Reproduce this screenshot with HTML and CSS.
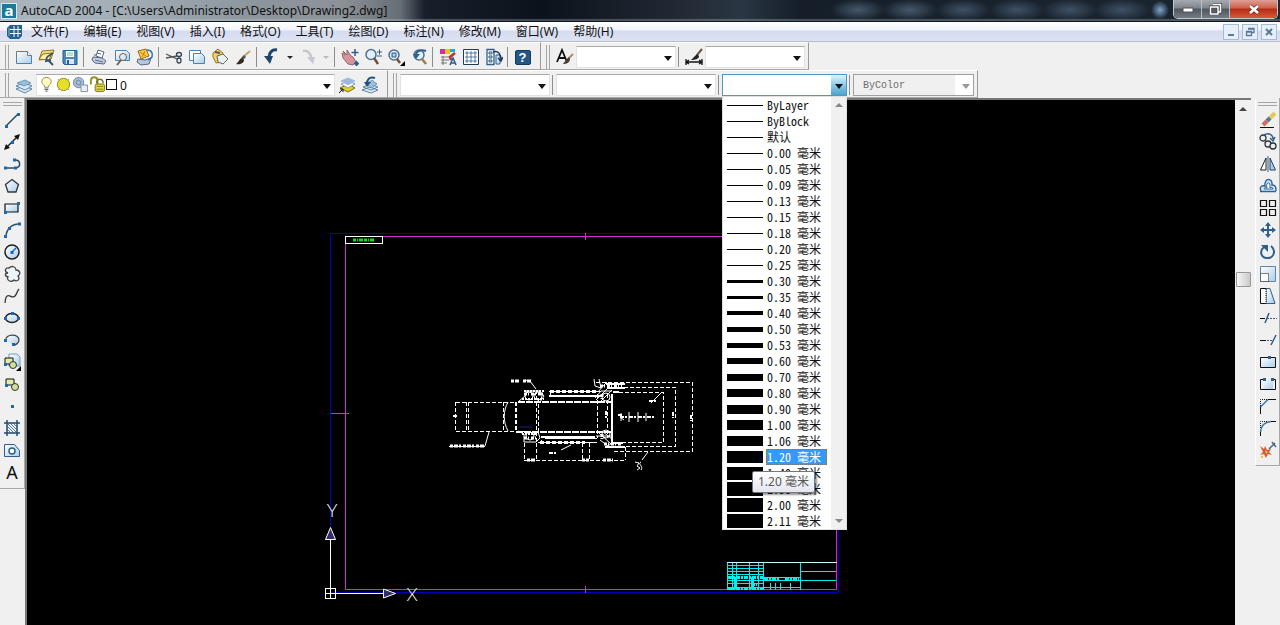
FILE: index.html
```
<!DOCTYPE html>
<html lang="zh-CN">
<head>
    <meta charset="UTF-8">
    <meta name="viewport" content="width=device-width, initial-scale=1.0">
    <title>AutoCAD 2004</title>
    <link rel="stylesheet" href="styles.css">
</head>
<body>

<!-- icon set -->
<svg class="defs" width="0" height="0" aria-hidden="true">
    <defs>
        <linearGradient id="sky" x1="0" y1="0" x2="1" y2="1"><stop offset="0" stop-color="#fff"/><stop offset="1" stop-color="#a9cdea"/></linearGradient>
        <pattern id="hatch" width="3" height="3" patternUnits="userSpaceOnUse"><path d="M0 0l3 3" stroke="#2b5c8c" stroke-width=".8"/></pattern>
    </defs>
    <symbol id="i-new" viewBox="0 0 18 18"><path d="M1.500 3.500h11l4 4v8h-15z" fill="url(#sky)" stroke="#4682b4"/><path d="M12.500 3.500v4h4" fill="#fff" stroke="#4682b4"/></symbol>
    <symbol id="i-open" viewBox="0 0 18 18"><path d="M4 3l12-1-3 9-12 1z" fill="#f3dc7a" stroke="#907a2c"/><path d="M1 11l4-5 9-1-3 7z" fill="#fff3a8" stroke="#8c7620"/><path d="M9 9l6-4M9 9l-1 4 5-1M10 12l5 5" stroke="#38536f" stroke-width="1.800" fill="none"/></symbol>
    <symbol id="i-save" viewBox="0 0 18 18"><path d="M2 2.500h14v14H3.500L2 15z" fill="#4a86bb" stroke="#2a5f90"/><path d="M5 3h8v6H5z" fill="#fff"/><path d="M5 11h8v5H5z" fill="#d7e8f5"/><path d="M6 12h2v4H6z" fill="#2a5f90"/><path d="M6 5h6M6 7h6" stroke="#7db6a0"/></symbol>
    <symbol id="i-plot" viewBox="0 0 18 18"><path d="M6 8l2-6 6 2-2 6z" fill="#fff" stroke="#53678a"/><path d="M3 9l9 1 4 3-2 3-9-1-3-3z" fill="#c5cede" stroke="#53678a"/><path d="M5 12l8 2M7 5l4 1M4 7h2" stroke="#53678a" fill="none"/></symbol>
    <symbol id="i-preview" viewBox="0 0 18 18"><path d="M2.500 2.500h11l3 3v7h-14z" fill="url(#sky)" stroke="#4682b4"/><circle cx="10" cy="9" r="3.500" fill="#d8edfa" stroke="#666"/><path d="M8 12l-4 5" stroke="#7b5a45" stroke-width="2"/></symbol>
    <symbol id="i-publish" viewBox="0 0 18 18"><path d="M2 11l7 1 6-2-2 6-8 1-4-3z" fill="#b9c7dc" stroke="#53678a"/><path d="M2 3l8-2 3 7-8 3z" fill="#f6cf4a" stroke="#9a6a13"/><path d="M4 4l6 4M9 3L6 9" stroke="#c57c17"/><path d="M11 2c5 0 6 4 5 7l-4 3" fill="none" stroke="#2b74a5" stroke-width="1.500"/></symbol>
    <symbol id="i-cut" viewBox="0 0 18 18"><path d="M1 6l11 5M1 10l11-2" stroke="#555" stroke-width="1.300"/><ellipse cx="14" cy="6.500" rx="2.500" ry="2" fill="none" stroke="#345" stroke-width="1.300"/><ellipse cx="14" cy="12.500" rx="2" ry="2.500" fill="none" stroke="#345" stroke-width="1.300"/></symbol>
    <symbol id="i-copy" viewBox="0 0 18 18"><path d="M1.500 2.500h11v10h-11z" fill="#fff" stroke="#4682b4"/><path d="M5.500 5.500h8l3 3v7h-11z" fill="url(#sky)" stroke="#4682b4"/></symbol>
    <symbol id="i-paste" viewBox="0 0 18 18"><path d="M2 5l5-4 5 4-1 9-6 1-3-6z" fill="#f1d269" stroke="#967726"/><path d="M6 8l6-2 5 5-5 5-5-2z" fill="#e7eff7" stroke="#6e674d"/><path d="M4 4l5 1" stroke="#555" stroke-width="2"/></symbol>
    <symbol id="i-brush" viewBox="0 0 18 18"><path d="M16 3L9 9" stroke="#c9a372" stroke-width="2"/><path d="M11 8L8 11" stroke="#555" stroke-width="3"/><path d="M8 10c-3 1-3 4-6 6 4 1 8-1 8-4z" fill="#35291f"/></symbol>
    <symbol id="i-undo" viewBox="0 0 18 18"><path d="M14 2C9 1 6 5 6 9" fill="none" stroke="#1d456f" stroke-width="3"/><path d="M1 8h9l-3 8z" fill="#1d456f"/></symbol>
    <symbol id="i-redo" viewBox="0 0 18 18"><path d="M4 3c5-1 8 3 8 7" fill="none" stroke="#c4c7cb" stroke-width="2.500"/><path d="M8 9h8l-2 7z" fill="#c4c7cb"/></symbol>
    <symbol id="i-pan" viewBox="0 0 18 18"><path d="M1 5l3 2-2-4 4 4 0-5 4 6 2 1 3 5-3 3-5-1-5-6z" fill="#d8949a" stroke="#8d6670"/><path d="M14 14l3 3" stroke="#315e8d" stroke-width="4"/><path d="M14 1v7M10.500 4.500h7" stroke="#315e8d" stroke-width="1.500"/></symbol>
    <symbol id="i-zoom" viewBox="0 0 18 18"><circle cx="7" cy="6.500" r="5" fill="#e1f0fb" stroke="#53708c" stroke-width="1.500"/><path d="M10 10l4 6" stroke="#70513f" stroke-width="2.500"/><path d="M13 4h5M15.500 1.500v5M13 8h5" stroke="#315e8d"/></symbol>
    <symbol id="i-zoomwin" viewBox="0 0 18 18"><circle cx="7" cy="7" r="5" fill="#e1f0fb" stroke="#53708c" stroke-width="1.500"/><path d="M5 5h4v4H5z" fill="#a9cdea" stroke="#315e8d"/><path d="M10 11l3 4" stroke="#70513f" stroke-width="2.500"/><path d="M18 13v5h-5z"/></symbol>
    <symbol id="i-zoomprev" viewBox="0 0 18 18"><circle cx="9" cy="7" r="5" fill="#e1f0fb" stroke="#53708c" stroke-width="1.500"/><path d="M12 11l4 5" stroke="#a07a50" stroke-width="2.500"/><path d="M6 7c0-4 5-6 10-4" fill="none" stroke="#315e8d" stroke-width="2"/><path d="M3 6h7l-4 5z" fill="#315e8d"/></symbol>
    <symbol id="i-props" viewBox="0 0 18 18"><path d="M1 1h5v5H1z" fill="#e424a4"/><path d="M6 1h5v5H6z" fill="#e9c419"/><path d="M11 1h5v3h-5z" fill="#26a6d8"/><path d="M2 9h8M2 12h8M2 15h6M4 8v9" stroke="#777"/><path d="M16 5l-5 4 1 3" stroke="#b03535" stroke-width="2.500" fill="none"/><path d="M11 17l3-7 3 7M12 15h4" stroke="#315e8d" stroke-width="1.500" fill="none"/></symbol>
    <symbol id="i-center" viewBox="0 0 18 18"><path d="M1.500 1.500h15v15h-15z" fill="#fff" stroke="#1d3c60"/><path d="M4 4h2v2H4zM8 4h2v2H8zM12 4h2v2h-2zM4 8h2v2H4zM8 8h2v2H8zM12 8h2v2h-2zM4 12h2v2H4zM8 12h2v2H8zM12 12h2v2h-2z" fill="#fff" stroke="#315e8d" stroke-width=".8"/></symbol>
    <symbol id="i-palette" viewBox="0 0 18 18"><path d="M2 1.500h7v15H2z" fill="#fff" stroke="#315e8d" stroke-width="1.300"/><path d="M4 4h3v2H4zM4 8h3v2H4zM4 12h3v2H4zM11 7h4v9h-4z" fill="#cfe2f3" stroke="#315e8d"/><path d="M8 4c5-2 8 2 8 8M13 10l3 3 2-4" fill="none" stroke="#1d3c60" stroke-width="1.500"/></symbol>
    <symbol id="i-layers" viewBox="0 0 18 18"><path d="M1 13l8-3 8 3-7 4z" fill="#dbe9f3" stroke="#426c94" stroke-width=".8"/><path d="M1 10l8-3 8 3-7 4z" fill="#dbe9f3" stroke="#426c94" stroke-width=".8"/><path d="M2 7l8-3 6 3-7 3z" fill="#9bbfdf" stroke="#5e86ab" stroke-width=".8"/></symbol>
    <symbol id="i-laycur" viewBox="0 0 18 18"><path d="M2 12l8-4 7 4-7 4z" fill="#e1cf24" stroke="#777217"/><path d="M3 8l7-3 7 3-7 4z" fill="#fff" stroke="#839bb2"/><path d="M3 5l7-3 7 3-7 4z" fill="#9db8e4" stroke="#a8bcd0"/><path d="M1 17l4-4M2 13h3v3" fill="none" stroke="#111"/></symbol>
    <symbol id="i-layprev" viewBox="0 0 18 18"><path d="M1 14l8-3 8 3-7 3zM2 11l7-3 8 3-7 3z" fill="#dbe9f3" stroke="#426c94" stroke-width=".8"/><path d="M5 8l6-4 5 4-6 4z" fill="#9bbfdf" stroke="#5e86ab" stroke-width=".8"/><path d="M14 2C8 0 6 4 6 8" fill="none" stroke="#234f7c" stroke-width="2"/><path d="M3 6h7l-4 5z" fill="#234f7c"/></symbol>
    <symbol id="i-bulb" viewBox="0 0 18 18"><path d="M7 12c0-3-3-3-3-6 0-6 10-6 10 0 0 3-3 3-3 6z" fill="#fffbc3" stroke="#928b4c"/><path d="M7 14h4M8 16h2" stroke="#667" stroke-width="1.500"/></symbol>
    <symbol id="i-sun" viewBox="0 0 18 18"><path d="M3 3l12 12M15 3L3 15" stroke="#999"/><circle cx="9" cy="9" r="6.500" fill="#e6de28" stroke="#8d861a"/></symbol>
    <symbol id="i-vp" viewBox="0 0 18 18"><circle cx="7" cy="7" r="5.500" fill="#a9bdd3" stroke="#6887a5"/><circle cx="7" cy="7" r="2.500" fill="none" stroke="#6887a5"/><path d="M9.500 9.500h7v7h-7z" fill="#e8eef4" stroke="#7890a8"/></symbol>
    <symbol id="i-lock" viewBox="0 0 18 18"><path d="M2 9V5c0-5 7-5 7 0v4" fill="none" stroke="#929126" stroke-width="2"/><path d="M8 8c0-6 7-6 7 0" fill="none" stroke="#777526" stroke-width="1.500"/><rect x="6.500" y="8.500" width="10" height="8" rx="2" fill="#ddd63d" stroke="#777526"/><path d="M8 11h7M8 14h7" stroke="#8a8525"/></symbol>

    <symbol id="i-line" viewBox="0 0 18 18"><path d="M3 15L15 3" stroke="#24445f" stroke-width="1.500"/><path d="M2 14h3v3H2zM14 2h3v3h-3z" fill="#1c69b0"/></symbol>
    <symbol id="i-xline" viewBox="0 0 18 18"><path d="M3 15L15 3" stroke="#222" stroke-width="1.500"/><path d="M1 17l2-6 4 4zM17 1l-6 2 4 4z" fill="#111"/><path d="M8 8h3v3H8z" fill="#1c69b0"/></symbol>
    <symbol id="i-pline" viewBox="0 0 18 18"><path d="M3 13h10c5-1 5-8-1-8" fill="none" stroke="#35495c" stroke-width="1.500"/><path d="M1 11.500h3v3H1zM11 11.500h3v3h-3zM10 3.500h3v3h-3z" fill="#1c69b0"/></symbol>
    <symbol id="i-polygon" viewBox="0 0 18 18"><path d="M9 2.500l6.500 5-2.500 7.500H5l-2.500-7.500z" fill="url(#sky)" stroke="#30383f" stroke-width="1.300"/></symbol>
    <symbol id="i-rect" viewBox="0 0 18 18"><path d="M2 5h13v8H2z" fill="url(#sky)" stroke="#111" stroke-width="1.200"/><path d="M1 12h3v3H1zM14 3h3v3h-3z" fill="#1c69b0"/></symbol>
    <symbol id="i-arc" viewBox="0 0 18 18"><path d="M3 16C3 9 8 3 16 3" fill="none" stroke="#315372" stroke-width="1.500"/><path d="M1 14h3v3H1zM5 6h3v3H5zM15 1.500h3v3h-3z" fill="#1c69b0"/></symbol>
    <symbol id="i-circle" viewBox="0 0 18 18"><circle cx="9" cy="9" r="7" fill="url(#sky)" stroke="#222" stroke-width="1.500"/><path d="M9 9l4-4" stroke="#1c69b0" stroke-width="1.500"/><path d="M7.500 8h3v3h-3z" fill="#1c69b0"/></symbol>
    <symbol id="i-cloud" viewBox="0 0 18 18"><path d="M5 8C1 7 2 2 6 3c3-3 7-1 7 2 4 0 5 4 2 6 3 4-2 6-4 4-3 3-8 0-6-3-4-1-3-4 0-4z" fill="#edf4fa" stroke="#444" stroke-width="1.300"/></symbol>
    <symbol id="i-spline" viewBox="0 0 18 18"><path d="M2 16C3 2 9 13 12 9c2-2 2-5 4-7" fill="none" stroke="#333" stroke-width="1.300"/></symbol>
    <symbol id="i-ellipse" viewBox="0 0 18 18"><ellipse cx="9" cy="9" rx="6.500" ry="4.500" fill="url(#sky)" stroke="#222" stroke-width="1.500"/><path d="M1 8h3v3H1zM8 3h3v3H8zM14 8h3v3h-3z" fill="#1c69b0"/></symbol>
    <symbol id="i-earc" viewBox="0 0 18 18"><path d="M3 9C2 3 16 2 16 9c0 3-3 5-6 5" fill="url(#sky)" stroke="#444" stroke-width="1.300"/><path d="M1 8h3v3H1zM9 12h3v3H9z" fill="#1c69b0"/></symbol>
    <symbol id="i-insert" viewBox="0 0 18 18"><path d="M6 1h8l3 3v9H6z" fill="url(#sky)" stroke="#729ac0"/><path d="M2 5h8v6H2z" fill="#dfecab" stroke="#111"/><circle cx="10" cy="12" r="3.500" fill="#cde29a" stroke="#333"/><path d="M18 13v5h-5z"/><path d="M1 10h3v3H1z" fill="#1c69b0"/></symbol>
    <symbol id="i-block" viewBox="0 0 18 18"><path d="M3 4h8v6H3z" fill="#dfecab" stroke="#111"/><circle cx="12" cy="12" r="3.500" fill="#cde29a" stroke="#333"/><path d="M2 9h3v3H2z" fill="#1c69b0"/></symbol>
    <symbol id="i-point" viewBox="0 0 18 18"><path d="M8 8h3v3H8z" fill="#1c69b0"/></symbol>
    <symbol id="i-hatch" viewBox="0 0 18 18"><path d="M4 4h10v10H4z" fill="url(#hatch)"/><path d="M4 1v16M14 1v16M1 4h16M1 14h16" stroke="#234c70" stroke-width="1.500"/></symbol>
    <symbol id="i-region" viewBox="0 0 18 18"><path d="M1.500 3.500h10l5 6v6h-15z" fill="url(#sky)" stroke="#315e8d"/><circle cx="9" cy="10" r="3" fill="#fff" stroke="#315e8d" stroke-width="1.500"/></symbol>

    <symbol id="i-erase" viewBox="0 0 18 18"><path d="M16 2l-6 6" stroke="#e6ca4e" stroke-width="4"/><path d="M11 7l-3 3" stroke="#5279a6" stroke-width="4"/><path d="M8 10l-4 4" stroke="#d66860" stroke-width="4"/><path d="M1 16.500h14" stroke="#111"/></symbol>
    <symbol id="i-copyobj" viewBox="0 0 18 18"><g fill="#e9f1f8" stroke="#333" stroke-width="1.300"><circle cx="4" cy="5" r="3"/><circle cx="9" cy="11" r="3"/><circle cx="14" cy="13" r="3"/></g><path d="M5 2c5-3 9 0 9 4M11 5l3 3 2-4" fill="none" stroke="#315e8d" stroke-width="1.500"/></symbol>
    <symbol id="i-mirror" viewBox="0 0 18 18"><path d="M7 3v12H1.500z" fill="#fff" stroke="#222"/><path d="M11 3v12h5.500z" fill="#a9cdea" stroke="#24445f"/><path d="M9 1v16" stroke="#315e8d"/></symbol>
    <symbol id="i-offset" viewBox="0 0 18 18"><path d="M1 14.500h16M2 14c-2-4 1-6 4-5C5 0 14 1 13 8c4 0 4 3 4 6" fill="#d7e8f6" stroke="#2b639a" stroke-width="1.400"/><path d="M5 12h9c0-2-2-2-3-1 1-8-5-6-3 0-2-1-3 0-3 1z" fill="#fff" stroke="#2b639a"/></symbol>
    <symbol id="i-array" viewBox="0 0 18 18"><path d="M1.500 1.500h6v6h-6zM10.500 1.500h6v6h-6zM1.500 10.500h6v6h-6zM10.500 10.500h6v6h-6z" fill="#eee" stroke="#111" stroke-width="1.200"/></symbol>
    <symbol id="i-move" viewBox="0 0 18 18"><path d="M9 3v12M3 9h12" stroke="#315e8d" stroke-width="2"/><path d="M9 1l3 4H6zM9 17l3-4H6zM1 9l4-3v6zM17 9l-4-3v6z" fill="#315e8d"/></symbol>
    <symbol id="i-rotate" viewBox="0 0 18 18"><path d="M12 3c6 5 2 13-4 12C2 15 0 8 5 4" fill="none" stroke="#315e8d" stroke-width="2"/><path d="M2 2h7v7z" fill="#315e8d"/></symbol>
    <symbol id="i-scale" viewBox="0 0 18 18"><path d="M1.500 1.500h15v15h-15z" fill="url(#sky)" stroke="#5e86ab"/><path d="M1.500 8.500h8v8h-8z" fill="#fff" stroke="#111" stroke-dasharray="1 1"/></symbol>
    <symbol id="i-stretch" viewBox="0 0 18 18"><path d="M7 1.500h4l5 15H7z" fill="url(#sky)" stroke="#315e8d"/><path d="M7 1.500H1.500v15H7" fill="#fff" stroke="#111"/><path d="M7 2v14" stroke="#111" stroke-dasharray="1 1"/></symbol>
    <symbol id="i-trim" viewBox="0 0 18 18"><path d="M1 9.500h5" stroke="#111"/><path d="M8 9.500h10" stroke="#315e8d" stroke-dasharray="2 1"/><path d="M10 4L6 14" stroke="#315e8d" stroke-width="1.500"/></symbol>
    <symbol id="i-extend" viewBox="0 0 18 18"><path d="M1 9.500h6" stroke="#111"/><path d="M8 9.500h5" stroke="#315e8d" stroke-dasharray="2 1"/><path d="M17 4l-5 10" stroke="#315e8d" stroke-width="1.500"/></symbol>
    <symbol id="i-breakpt" viewBox="0 0 18 18"><path d="M1.500 4.500h15v10h-15z" fill="url(#sky)" stroke="#111"/><path d="M9 3h3v3H9z" fill="#315e8d"/></symbol>
    <symbol id="i-break" viewBox="0 0 18 18"><path d="M4 4h10v10H4z" fill="url(#sky)"/><path d="M5 4.500H1.500v10h15v-10H13" fill="none" stroke="#111"/><path d="M4 3h3v3H4zM12 3h3v3h-3z" fill="#315e8d"/></symbol>
    <symbol id="i-chamfer" viewBox="0 0 18 18"><path d="M1.500 17V9M9 2.500h8" stroke="#111"/><path d="M1.500 9V2.500H9" fill="none" stroke="#111" stroke-dasharray="1 1"/><path d="M1.500 10L9 2.500" stroke="#3878b4" stroke-width="1.500"/></symbol>
    <symbol id="i-fillet" viewBox="0 0 18 18"><path d="M1.500 17v-5M12 2.500h5" stroke="#111"/><path d="M1.500 9V2.500H9" fill="none" stroke="#111" stroke-dasharray="1 1"/><path d="M1.500 13C2 6 6 3 12 2.500" fill="none" stroke="#3878b4" stroke-width="1.500"/></symbol>
    <symbol id="i-explode" viewBox="0 0 18 18"><path d="M1 5l4 3 1-3 2 4 4-1-2 3 3 3-4-1-2 4-2-4-4 1 3-3z" fill="#d95a34"/><path d="M6 9l3 2-2 2zM2 15h2v2H2z" fill="#f4c040"/><path d="M10 8l6-6M13 1l4 5" stroke="#4a6685" stroke-width="1.500"/></symbol>
</svg>

<header class="titlebar">
    <span class="app-logo">a</span>
    <h1>AutoCAD 2004 - [C:\Users\Administrator\Desktop\Drawing2.dwg]</h1>
    <div class="window-buttons">
        <button class="win" aria-label="最小化"><svg width="12" height="10"><path d="M1 4h10v4H1z" fill="#fff" stroke="#555"/></svg></button>
        <button class="win" aria-label="还原"><svg width="13" height="12"><path d="M4 1.500h7.500V9H9M1.500 4H9v7H1.500z" fill="none" stroke="#444" stroke-width="3"/><path d="M4 1.500h7.500V9H9M1.500 4H9v7H1.500z" fill="none" stroke="#fff" stroke-width="1.500"/></svg></button>
        <button class="win win-close" aria-label="关闭"><svg width="12" height="11"><path d="M2 2l8 7M10 2L2 9" stroke="#633" stroke-width="4"/><path d="M2 2l8 7M10 2L2 9" stroke="#fff" stroke-width="2.500"/></svg></button>
    </div>
</header>

<nav class="menubar">
    <svg class="doc-icon" width="16" height="16" viewBox="0 0 16 16"><path d="M3 1h12v11l-3 3H3L0 12V4z" fill="#23618f"/><path d="M3 5.500h11M3 9.500h11M7 2v11M11 2v11" stroke="#fff"/><path d="M2 4v8" stroke="#8bb8d8"/></svg>
    <button>文件(F)</button>
    <button>编辑(E)</button>
    <button>视图(V)</button>
    <button>插入(I)</button>
    <button>格式(O)</button>
    <button>工具(T)</button>
    <button>绘图(D)</button>
    <button>标注(N)</button>
    <button>修改(M)</button>
    <button>窗口(W)</button>
    <button>帮助(H)</button>
    <div class="doc-buttons">
        <button aria-label="最小化图形"><svg width="10" height="10"><path d="M2 8h6" stroke="#5a7897" stroke-width="2"/></svg></button>
        <button aria-label="还原图形"><svg width="10" height="10"><path d="M3 1.500h6v4H7M1.500 4.500h5v4h-5zM3 2h6M1 5h6" fill="none" stroke="#5a7897" stroke-width="1.300"/></svg></button>
        <button aria-label="关闭图形"><svg width="10" height="10"><path d="M2 2l6 6M8 2L2 8" stroke="#5a7897" stroke-width="2"/></svg></button>
    </div>
</nav>

<div class="toolbar-row">
    <div class="toolbar">
        <span class="grip"></span>
        <button class="tool" aria-label="新建"><svg><use href="#i-new"/></svg></button>
        <button class="tool" aria-label="打开"><svg><use href="#i-open"/></svg></button>
        <button class="tool" aria-label="保存"><svg><use href="#i-save"/></svg></button>
        <span class="sep"></span>
        <button class="tool" aria-label="打印"><svg><use href="#i-plot"/></svg></button>
        <button class="tool" aria-label="打印预览"><svg><use href="#i-preview"/></svg></button>
        <button class="tool" aria-label="发布"><svg><use href="#i-publish"/></svg></button>
        <span class="sep"></span>
        <button class="tool" aria-label="剪切"><svg><use href="#i-cut"/></svg></button>
        <button class="tool" aria-label="复制"><svg><use href="#i-copy"/></svg></button>
        <button class="tool" aria-label="粘贴"><svg><use href="#i-paste"/></svg></button>
        <button class="tool" aria-label="特性匹配"><svg><use href="#i-brush"/></svg></button>
        <span class="sep"></span>
        <button class="tool" aria-label="放弃"><svg><use href="#i-undo"/></svg></button>
        <button class="caret" aria-label="放弃列表"></button>
        <button class="tool" aria-label="重做"><svg><use href="#i-redo"/></svg></button>
        <button class="caret caret-off" aria-label="重做列表"></button>
        <span class="sep"></span>
        <button class="tool" aria-label="实时平移"><svg><use href="#i-pan"/></svg></button>
        <button class="tool" aria-label="实时缩放"><svg><use href="#i-zoom"/></svg></button>
        <button class="tool" aria-label="窗口缩放"><svg><use href="#i-zoomwin"/></svg></button>
        <button class="tool" aria-label="缩放上一个"><svg><use href="#i-zoomprev"/></svg></button>
        <span class="sep"></span>
        <button class="tool" aria-label="特性"><svg><use href="#i-props"/></svg></button>
        <button class="tool" aria-label="设计中心"><svg><use href="#i-center"/></svg></button>
        <button class="tool" aria-label="工具选项板"><svg><use href="#i-palette"/></svg></button>
        <span class="sep"></span>
        <button class="tool" aria-label="帮助"><span class="help-mark">?</span></button>
    </div>
    <div class="toolbar">
        <span class="grip"></span>
        <button class="tool" aria-label="文字样式"><svg viewBox="0 0 18 18"><path d="M1 14L6 2l5 12M3 10h6" fill="none" stroke="#111" stroke-width="1.800"/><path d="M17 6l-5 5" stroke="#a88a70" stroke-width="2"/><path d="M13 9l-3 3-3 4c4 0 7-2 7-5z" fill="#4b3c35"/></svg></button>
        <div class="combo style-combo"><select aria-label="文字样式管理器"><option></option></select></div>
        <span class="sep"></span>
        <button class="tool" aria-label="标注样式"><svg viewBox="0 0 18 18"><path d="M1 11v6M17 11v6M1 14h16M4 12l-3 2 3 2M14 12l3 2-3 2" stroke="#111" stroke-width="1.300" fill="none"/><path d="M17 1l-5 6" stroke="#665646" stroke-width="2"/><path d="M12 6l-6 6c4 0 8-1 8-4z" fill="#222"/></svg></button>
        <div class="combo style-combo"><select aria-label="标注样式管理器"><option></option></select></div>
    </div>
</div>

<div class="toolbar-row">
    <div class="toolbar">
        <span class="grip"></span>
        <button class="tool" aria-label="图层特性管理器"><svg><use href="#i-layers"/></svg></button>
        <div class="combo layer-combo">
            <select aria-label="图层"><option>0</option></select>
            <div class="layer-state">
                <svg><use href="#i-bulb"/></svg>
                <svg><use href="#i-sun"/></svg>
                <svg><use href="#i-vp"/></svg>
                <svg><use href="#i-lock"/></svg>
                <span class="swatch"></span>
            </div>
        </div>
        <button class="tool" aria-label="置为当前图层"><svg><use href="#i-laycur"/></svg></button>
        <button class="tool" aria-label="上一个图层"><svg><use href="#i-layprev"/></svg></button>
    </div>
    <div class="toolbar">
        <span class="grip"></span>
        <div class="combo color-combo"><select aria-label="颜色控制"><option></option></select></div>
        <span class="sep"></span>
        <div class="combo linetype-combo"><select aria-label="线型控制"><option></option></select></div>
        <span class="sep"></span>
        <div class="combo weight-combo open">
            <select aria-label="线宽控制"><option></option></select>
            <div class="weight-popup">
                <ul class="weight-list" id="weightList" role="listbox" aria-label="线宽"></ul>
                <div class="popup-scroll"><span class="up"></span><span class="down"></span></div>
                <div class="tooltip" role="tooltip">1.20 毫米</div>
            </div>
        </div>
        <span class="sep"></span>
        <div class="combo plot-combo off"><select aria-label="打印样式控制" disabled><option>ByColor</option></select></div>
    </div>
</div>

<main class="workspace">
    <aside class="side">
        <span class="grip-h"></span>
        <button class="tool" aria-label="直线"><svg><use href="#i-line"/></svg></button>
        <button class="tool" aria-label="构造线"><svg><use href="#i-xline"/></svg></button>
        <button class="tool" aria-label="多段线"><svg><use href="#i-pline"/></svg></button>
        <button class="tool" aria-label="正多边形"><svg><use href="#i-polygon"/></svg></button>
        <button class="tool" aria-label="矩形"><svg><use href="#i-rect"/></svg></button>
        <button class="tool" aria-label="圆弧"><svg><use href="#i-arc"/></svg></button>
        <button class="tool" aria-label="圆"><svg><use href="#i-circle"/></svg></button>
        <button class="tool" aria-label="修订云线"><svg><use href="#i-cloud"/></svg></button>
        <button class="tool" aria-label="样条曲线"><svg><use href="#i-spline"/></svg></button>
        <button class="tool" aria-label="椭圆"><svg><use href="#i-ellipse"/></svg></button>
        <button class="tool" aria-label="椭圆弧"><svg><use href="#i-earc"/></svg></button>
        <button class="tool" aria-label="插入块"><svg><use href="#i-insert"/></svg></button>
        <button class="tool" aria-label="创建块"><svg><use href="#i-block"/></svg></button>
        <button class="tool" aria-label="点"><svg><use href="#i-point"/></svg></button>
        <button class="tool" aria-label="图案填充"><svg><use href="#i-hatch"/></svg></button>
        <button class="tool" aria-label="面域"><svg><use href="#i-region"/></svg></button>
        <button class="tool text-mark" aria-label="多行文字">A</button>
    </aside>

    <div class="canvas">
        <svg viewBox="27 100 1208 525" preserveAspectRatio="xMinYMin meet" fill="none">
            <!-- sheet frame -->
            <g stroke="#0000b4" shape-rendering="crispEdges">
                <path d="M330.500 233.500H838.500V592.500H330.500z"/>
            </g>
            <g stroke="#d428d4" shape-rendering="crispEdges">
                <path d="M345.500 236.500H836.500V589.500H345.500zM585.500 233v7M585.500 586v7M331 413.500h18"/>
            </g>
            <path d="M345.500 236.500h37v7h-37z" stroke="#fff" shape-rendering="crispEdges"/>
            <path d="M353 240h22" stroke="#12e012" stroke-width="3" stroke-dasharray="3 1 1 1 4 1"/>

            <!-- shaft assembly -->
            <g stroke="#fff" shape-rendering="crispEdges">
                <path stroke-dasharray="4 2" d="M455.500 402.500H516M455.500 431.500H524M455.500 402v29M466.500 402v29M468.500 402v29M503.500 402v29M515.500 402v29M516.500 402v29M536.500 390v53M538.500 398v35M597.500 394v44M607.500 394v44M612.500 392.500h50.500v50H614M612 387.500h63.500v59H625M596 382.500h96.500v69H614"/>
                <path stroke-dasharray="4 2" d="M524.500 443v17M536.500 443v17M582.500 443v17M589.500 443v17M625.500 447v13M524 460.500h101"/>
                <path stroke-width="2" stroke-dasharray="7 1" d="M518 402h93M516 432h96"/>
                <path stroke-width="2" d="M549 396h53M541 437h54M612 394v50"/>
                <path d="M545 438.500h52M538 442.500h59M549 391.500h52M550 390v7M541 440v3"/>
                <path stroke-width="3" stroke-dasharray="4 2" d="M550 391h48M540 442h45"/>
                <path stroke-width="2" d="M606 384h19M607 388h18M613 392h6M612 443h11M605 447h20"/>
            </g>
            <g stroke="#fff">
                <path d="M508 402c-5 9-5 20 0 29M518 402l8-7v-4h14l4 5-4 6M518 431l6 3v8h12l4-4-2-6M598 392l6-7 3-3M594 379l1 7 6 2-2-9M600 440l8 6 4-3M595 398l6-7h11M596 436h17M596 400l14-14M600 402l12-12M598 432l14 13M602 431l10 8"/>
                <circle cx="529" cy="396" r="4"/><circle cx="538" cy="396" r="4"/><circle cx="530" cy="436" r="4"/><circle cx="606" cy="397" r="4"/><circle cx="606" cy="434" r="4"/>
                <path stroke-width="3" stroke-dasharray="3 1 1 2" d="M524 394h21M600 386h22M524 438h13M604 444h18M602 434v7M602 394v6"/>
                <path stroke-width="2" stroke-dasharray="2 1" d="M522 399h22M524 391h20M522 434h15"/>
                <path d="M525 380l5 1 6 8M485 446l4-14M561 450l10-5M651 403l11-11M642 460l6-8"/>
                <path stroke-width="3" stroke-dasharray="3 1 4 1 2 2" d="M511 381h9M523 381h9M450 446h35M527 460h8M582 460h7M603 460h10"/>
                <path stroke-width="2" stroke-dasharray="4 1 2 2" d="M620 417h34M618 415h5M649 401h7M549 453h8M673 412v6M691 415v6M453 416h5M606 411v8"/>
                <path d="M621 413v8M629 412v10M638 412v10M646 413v8M620 417l4 3M635 462l4 1-2 3 3 2-3 2M641 462c-4 2 3 4 0 8M449 446.500h36"/>
            </g>
            <path d="M519 427h13" stroke="#1a1a88"/>

            <!-- title block -->
            <g stroke="#00f0f0" shape-rendering="crispEdges">
                <path d="M727.500 562v28M732.500 562v28M736.500 562v28M749.500 562v28M758.500 562v28M763.500 562v28M800.500 562v28M727 565.500h36M727 568.500h36M727 571.500h36M727 574.500h36M727 580.500h73M727 583.500h36M727 587.500h73M763 577.500h37M800 571.500h36M800 580.500h36M770.500 583v7M775.500 583v7M780.500 583v7M790.500 583v7"/>
                <path stroke-width="3" stroke-dasharray="4 1 2 1" d="M728 577h35M764 579h15M785 579h14M751 584h6M728 588h35"/>
                <path stroke-width="3" d="M735 577v12M752 577v12"/>
                <path stroke="#c8ffff" d="M727 562.500h110"/>
            </g>

            <!-- UCS icon -->
            <g stroke="#fff">
                <path shape-rendering="crispEdges" d="M325.500 588.500h10v10h-10zM330.500 598v-58M325 593.500h59"/>
                <path fill="#332f66" d="M325.500 539.500l5-12 5 12zM383.500 589l12 4.500-12 4.500z"/>
            </g>
            <text class="axis" x="332" y="517" text-anchor="middle">Y</text>
            <text class="axis" x="412" y="601" text-anchor="middle">X</text>
        </svg>
    </div>

    <div class="scrollbar"><span class="up"></span><span class="thumb"></span></div>

    <aside class="side side-right">
        <span class="grip-h"></span>
        <button class="tool" aria-label="删除"><svg><use href="#i-erase"/></svg></button>
        <button class="tool" aria-label="复制对象"><svg><use href="#i-copyobj"/></svg></button>
        <button class="tool" aria-label="镜像"><svg><use href="#i-mirror"/></svg></button>
        <button class="tool" aria-label="偏移"><svg><use href="#i-offset"/></svg></button>
        <button class="tool" aria-label="阵列"><svg><use href="#i-array"/></svg></button>
        <button class="tool" aria-label="移动"><svg><use href="#i-move"/></svg></button>
        <button class="tool" aria-label="旋转"><svg><use href="#i-rotate"/></svg></button>
        <button class="tool" aria-label="缩放"><svg><use href="#i-scale"/></svg></button>
        <button class="tool" aria-label="拉伸"><svg><use href="#i-stretch"/></svg></button>
        <button class="tool" aria-label="修剪"><svg><use href="#i-trim"/></svg></button>
        <button class="tool" aria-label="延伸"><svg><use href="#i-extend"/></svg></button>
        <button class="tool" aria-label="打断于点"><svg><use href="#i-breakpt"/></svg></button>
        <button class="tool" aria-label="打断"><svg><use href="#i-break"/></svg></button>
        <button class="tool" aria-label="倒角"><svg><use href="#i-chamfer"/></svg></button>
        <button class="tool" aria-label="圆角"><svg><use href="#i-fillet"/></svg></button>
        <button class="tool" aria-label="分解"><svg><use href="#i-explode"/></svg></button>
    </aside>
</main>

<script>
    // label, line thickness in px
    const weights = [
        ["ByLayer", 1], ["ByBlock", 1], ["默认", 1],
        ["0.00 毫米", 1], ["0.05 毫米", 1], ["0.09 毫米", 1], ["0.13 毫米", 1],
        ["0.15 毫米", 1], ["0.18 毫米", 1], ["0.20 毫米", 1], ["0.25 毫米", 1],
        ["0.30 毫米", 3], ["0.35 毫米", 3], ["0.40 毫米", 4], ["0.50 毫米", 5],
        ["0.53 毫米", 5], ["0.60 毫米", 6], ["0.70 毫米", 7], ["0.80 毫米", 8],
        ["0.90 毫米", 9], ["1.00 毫米", 10], ["1.06 毫米", 10], ["1.20 毫米", 12],
        ["1.40 毫米", 13], ["1.58 毫米", 14], ["2.00 毫米", 14], ["2.11 毫米", 14]
    ];
    const selected = "1.20 毫米";

    document.getElementById("weightList").innerHTML = weights.map(([label, size]) => `
        <li role="option" aria-selected="${label === selected}">
            <span class="sample"><span class="stroke" style="height: ${size}px"></span></span>
            <span class="label">${label}</span>
        </li>`).join("");
</script>

</body>
</html>
```
FILE: styles.css
```
* { box-sizing: border-box; }
body { margin: 0; height: 100vh; display: flex; flex-direction: column; overflow: hidden; background: #f0f0f0; color: #111; font-family: "Noto Sans", "Noto Sans CJK SC", sans-serif; font-size: 12px; }
button { padding: 0; border: 0; background: none; color: inherit; font: inherit; }
.defs { position: absolute; }

/* title bar */
.titlebar {
    display: flex; align-items: center; flex: none; height: 22px; padding-right: 2px; border-bottom: 1px solid #10161d;
    background:
        radial-gradient(circle 9px at 1160px 10px, #7fa6cd, transparent),
        radial-gradient(ellipse 28px 11px at 858px 10px, #46586b, transparent),
        radial-gradient(ellipse 28px 11px at 910px 10px, #46586b, transparent),
        radial-gradient(ellipse 28px 11px at 963px 10px, #3f5165, transparent),
        radial-gradient(ellipse 28px 11px at 1017px 10px, #3f5165, transparent),
        radial-gradient(ellipse 28px 11px at 1070px 10px, #3f5165, transparent),
        radial-gradient(ellipse 28px 11px at 1122px 10px, #3f5165, transparent),
        linear-gradient(90deg, #a9b4bd 0, #a3aeb6 120px, #8d969d 250px, #8c9298 340px, #666e76 400px, #161f2a 425px, #0b121b 540px, #242d38 700px, #2b3644 740px, #151e29 800px, #1c2632 100%);
    box-shadow: inset 0 -2px 1px rgba(200, 210, 220, 0.3);
}
.app-logo { width: 16px; height: 16px; margin: 0 4px 0 1px; border: 1px solid #d5eaf2; background: #187b9b; color: #fff; font-size: 15px; font-weight: bold; line-height: 12px; text-align: center; }
.titlebar h1 { flex: 1; margin: 0; font-size: 12px; font-weight: normal; white-space: nowrap; }
.window-buttons { display: flex; align-self: flex-start; height: 19px; border: 1px solid #c3c8cd; border-top: 0; border-radius: 0 0 5px 5px; overflow: hidden; }
.win { display: flex; align-items: center; justify-content: center; width: 28px; border-right: 1px solid #b9bfc5; background: linear-gradient(#a5abb1, #7c848c 45%, #4e565f 50%, #737b84); }
.win-close { width: 47px; border: 0; background: linear-gradient(#dda095, #cc604c 45%, #b52c13 50%, #d55a3b); }

/* menu bar */
.menubar { display: flex; align-items: center; flex: none; gap: 1px; height: 20px; padding: 0 3px 0 7px; border-bottom: 1px solid #b6bccc; background: linear-gradient(#fff, #f1f4fb 40%, #d6dcef 50%, #dde3f4); }
.menubar > button { padding: 0 7px; line-height: 18px; white-space: nowrap; }
.doc-icon { flex: none; }
.doc-buttons { display: flex; gap: 3px; margin-left: auto; }
.doc-buttons button { display: flex; align-items: center; justify-content: center; width: 16px; height: 16px; border: 1px solid #a5bcd6; background: #e6effa; }

/* toolbars */
.toolbar-row { display: flex; flex: none; height: 28px; }
.toolbar { display: flex; align-items: center; padding: 2px 6px 0 0; border-right: 1px solid #9a9a9a; border-bottom: 1px solid #a8a8a8; border-top: 1px solid #fff; }
.toolbar:last-child { padding-right: 3px; }
.grip { flex: none; width: 4px; height: 24px; margin: 0 3px 0 5px; border: 1px solid #a5a5a5; border-width: 0 1px; }
.sep { flex: none; width: 1px; height: 20px; margin: 0 3px 0 2px; background: #8e8e8e; }
.tool { display: flex; align-items: center; justify-content: center; flex: none; width: 23px; height: 22px; }
.tool svg { width: 18px; height: 18px; }
.caret { width: 13px; height: 22px; }
.caret::before { content: ""; display: block; width: 0; margin: auto; border: 3px solid transparent; border-top-color: #222; border-bottom: 0; }
.caret-off::before { border-top-color: #bbb; }
.help-mark { width: 16px; height: 15px; border: 1px solid #123c64; border-radius: 2px; background: #245785; color: #fff; font: bold 13px "Liberation Sans", sans-serif; line-height: 13px; text-align: center; }
.text-mark { font-size: 18px; line-height: 22px; }

/* combo boxes */
.combo { position: relative; flex: none; height: 22px; }
.combo select { appearance: none; display: block; width: 100%; height: 100%; padding: 0 20px 0 6px; border: 1px solid #e2e2e2; border-top-color: #aaa; border-radius: 0; background: #fff; color: #111; font: 12px "Noto Sans", sans-serif; }
.combo::after { content: ""; position: absolute; right: 4px; top: 10px; border: 4px solid transparent; border-top: 5px solid #111; border-bottom: 0; pointer-events: none; }
.style-combo { width: 100px; }
.layer-combo { width: 299px; margin-left: 1px; }
.layer-combo select { padding-left: 83px; }
.color-combo { width: 150px; }
.linetype-combo { width: 160px; }
.weight-combo { width: 125px; }
.plot-combo { width: 121px; }
.layer-state { position: absolute; left: 2px; top: 2px; display: flex; align-items: center; pointer-events: none; }
.layer-state svg { width: 17px; height: 17px; }
.swatch { width: 11px; height: 11px; border: 1px solid #111; background: #fff; }
.open select { border: 1px solid #4b9ac4; background: linear-gradient(#dff3fd, #8ccbea 50%, #4ea3cf) right / 15px 100% no-repeat #fff; }
.off select { border-color: #a0a0a0; background: linear-gradient(#fff, #fff) right / 18px 100% no-repeat #f0f0f0; color: #6d6d6d; padding-left: 9px; font: 10px "Liberation Mono", monospace; opacity: 1; }
.off::after { border-top-color: #999; }

/* lineweight popup */
.weight-popup { position: absolute; z-index: 2; left: 0; top: 22px; display: flex; width: 125px; border: 1px solid #e0e0e0; background: #fff; }
.weight-list { flex: 1; margin: 0; padding: 0; list-style: none; }
.weight-list li { display: flex; align-items: center; height: 16px; padding-left: 4px; }
.sample { display: flex; align-items: center; width: 36px; height: 16px; }
.stroke { width: 100%; background: #000; }
.label { margin-left: 3px; padding: 0 6px 0 1px; font: 12px "Noto Sans CJK SC", sans-serif; font-feature-settings: "hwid"; line-height: 16px; white-space: nowrap; }
.weight-list li[aria-selected="true"] .label { background: #3399ff; color: #fff; outline: 1px dotted #a86a28; outline-offset: -1px; }
.popup-scroll { display: flex; flex-direction: column; align-items: center; justify-content: space-between; width: 15px; padding: 6px 0; background: #f0f0f0; }
.up, .down { width: 0; border: 4px solid transparent; }
.up { border-bottom-color: #888; border-top: 0; }
.down { border-top-color: #888; border-bottom: 0; }
.tooltip { position: absolute; left: 29px; top: 374px; padding: 0 5px; border: 1px solid #767676; border-radius: 2px; background: linear-gradient(#fff, #e4e5f0); box-shadow: 2px 2px 2px rgba(0, 0, 0, 0.4); color: #575757; font-size: 12px; line-height: 20px; white-space: nowrap; }

/* workspace */
.workspace { display: flex; flex: 1; min-height: 0; }
.side { display: flex; flex-direction: column; align-items: center; align-self: flex-start; flex: none; width: 25px; border-right: 1px solid #a8a8a8; border-bottom: 1px solid #a8a8a8; padding-bottom: 5px; }
.side-right { margin-left: 4px; border-left: 1px solid #fff; padding-bottom: 4px; }
.grip-h { width: 19px; height: 4px; margin: 4px 0 3px; border: 1px solid #a5a5a5; border-width: 1px 0; }
.canvas { flex: 1; min-width: 0; background: #000; border: 2px solid #777; border-width: 2px 0 0 2px; }
.canvas svg { display: block; width: 100%; height: 100%; }
.axis { fill: #fff; font: 300 18px Lato, sans-serif; }
.scrollbar { display: flex; flex-direction: column; align-items: center; flex: none; width: 16px; border-top: 2px solid #777; background: #f0f0f0; }
.scrollbar .up { margin-top: 7px; border-bottom-color: #444; }
.thumb { width: 15px; height: 15px; margin-top: 161px; border: 1px solid #979797; border-radius: 1px; background: linear-gradient(90deg, #f7f7f7, #c9c9c9); }
```
